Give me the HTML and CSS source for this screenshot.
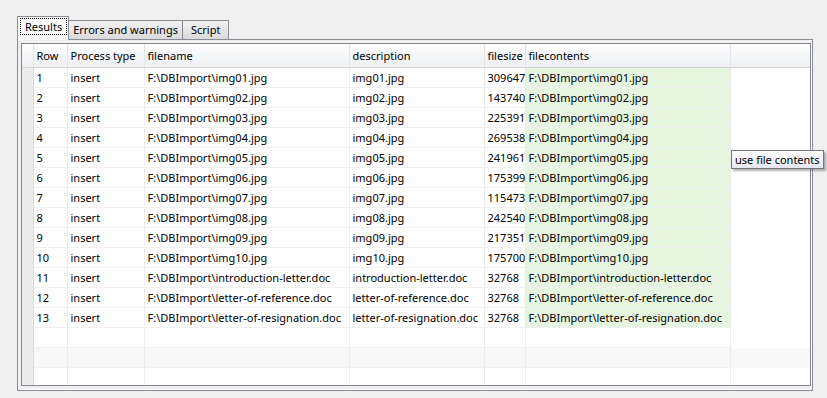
FILE: index.html
```html
<!DOCTYPE html>
<html>
<head>
    <meta charset="UTF-8">
    <link rel="stylesheet" href="styles.css">
</head>
<body>
    <div class="tabs">
        <div class="tab selected"><span class="focus">Results</span></div>
        <div class="tab">Errors and warnings</div>
        <div class="tab wide">Script</div>
    </div>
    <div class="pane">
        <div class="grid">
            <table>
                <colgroup>
                    <col class="c-gutter">
                    <col class="c-row">
                    <col class="c-type">
                    <col class="c-name">
                    <col class="c-desc">
                    <col class="c-size">
                    <col class="c-cont">
                    <col>
                </colgroup>
                <thead>
                    <tr>
                        <th class="gutter"></th>
                        <th>Row</th>
                        <th>Process type</th>
                        <th>filename</th>
                        <th>description</th>
                        <th>filesize</th>
                        <th>filecontents</th>
                        <th class="filler"></th>
                    </tr>
                </thead>
                <tbody id="rows"></tbody>
            </table>
        </div>
    </div>
    <div class="tooltip">use file contents</div>

    <script>
        const data = [
            ['img01.jpg', 309647],
            ['img02.jpg', 143740],
            ['img03.jpg', 225391],
            ['img04.jpg', 269538],
            ['img05.jpg', 241961],
            ['img06.jpg', 175399],
            ['img07.jpg', 115473],
            ['img08.jpg', 242540],
            ['img09.jpg', 217351],
            ['img10.jpg', 175700],
            ['introduction-letter.doc', 32768],
            ['letter-of-reference.doc', 32768],
            ['letter-of-resignation.doc', 32768]
        ];

        const tbody = document.getElementById('rows');
        data.forEach((d, i) => {
            const path = 'F:\\DBImport\\' + d[0];
            const tr = document.createElement('tr');
            tr.innerHTML =
                '<td class="gutter"></td>' +
                '<td>' + (i + 1) + '</td>' +
                '<td>insert</td>' +
                '<td>' + path + '</td>' +
                '<td>' + d[0] + '</td>' +
                '<td>' + d[1] + '</td>' +
                '<td class="content">' + path + '</td>' +
                '<td class="filler"></td>';
            tbody.appendChild(tr);
        });
        for (let i = 0; i < 3; i++) {
            const tr = document.createElement('tr');
            tr.className = 'empty' + (i === 1 ? ' alt' : '');
            tr.innerHTML = '<td class="gutter"></td>' + '<td></td>'.repeat(6) + '<td class="filler"></td>';
            tbody.appendChild(tr);
        }
    </script>
</body>
</html>
```

FILE: styles.css
```css
body {
    margin: 0;
    padding: 17px 15px 0 17px;
    background: #f0f0f0;
    font-family: 'Noto Sans', sans-serif;
    font-size: 11px;
    color: #000;
    overflow: hidden;
}

.tabs {
    display: flex;
    align-items: flex-end;
    height: 22px;
}

.tab {
    height: 18px;
    line-height: 18px;
    padding: 0 4px;
    border: 1px solid #898c95;
    border-bottom: none;
    background: linear-gradient(#f3f3f3, #e6e6e6 50%, #dadada);
    margin-left: -1px;
}

.tab:first-child {
    margin-left: 0;
}

.tab.wide {
    padding: 0 8px;
}

.tab.selected {
    position: relative;
    z-index: 1;
    height: 23px;
    line-height: 20px;
    padding: 0 1px 0 2px;
    background: #fcfcfc;
    margin-bottom: -1px;
}

.focus {
    display: inline-block;
    line-height: 15px;
    padding: 0 4px;
    border: 1px dotted #000;
}

.pane {
    width: 790px;
    height: 345px;
    border: 1px solid #898c95;
    padding: 3px 1px 2px 3px;
    background: #f0f0f0;
    box-shadow: inset -1px -1px 0 #fff;
}

.grid {
    height: 341px;
    border: 1px solid #828790;
    background: #fff;
    overflow: hidden;
}

table {
    width: 788px;
    border-collapse: collapse;
    table-layout: fixed;
}

.c-gutter { width: 11px; }
.c-row { width: 34px; }
.c-type { width: 77px; }
.c-name { width: 205px; }
.c-desc { width: 135px; }
.c-size { width: 41px; }
.c-cont { width: 205px; }

th {
    height: 23px;
    padding: 0 3px;
    text-align: left;
    font-weight: normal;
    white-space: nowrap;
    background: linear-gradient(#ffffff, #f4f5f7 50%, #eef0f3);
    border-right: 1px solid #e3e5e8;
    border-bottom: 1px solid #d5d5d5;
}

th.filler {
    border-right: none;
}

td {
    height: 19px;
    padding: 0 3px;
    white-space: nowrap;
    overflow: hidden;
    border-right: 1px solid #ebebeb;
    border-bottom: 1px solid #f0f0f0;
}

td.gutter {
    padding: 0;
    background: #ececec;
    border-right: 1px solid #d9d9d9;
    border-bottom: none;
    box-shadow: inset 2px -1px 0 #ececec, inset -1px -1px 0 #ececec, inset 0 -1px 0 #a0a0a0;
}

td.content {
    background: #e6f5df;
}

td.filler {
    border-right: none;
    border-bottom: none;
}

tr.alt td {
    background: #f8f8f8;
}

tr.alt td.gutter {
    background: #ececec;
}

.tooltip {
    position: absolute;
    left: 731px;
    top: 150px;
    height: 17px;
    line-height: 17px;
    padding: 0 3px;
    border: 1px solid #767676;
    background: linear-gradient(#ffffff, #e4e5f0);
    box-shadow: 2px 2px 2px rgba(0, 0, 0, 0.3);
    white-space: nowrap;
}
```
